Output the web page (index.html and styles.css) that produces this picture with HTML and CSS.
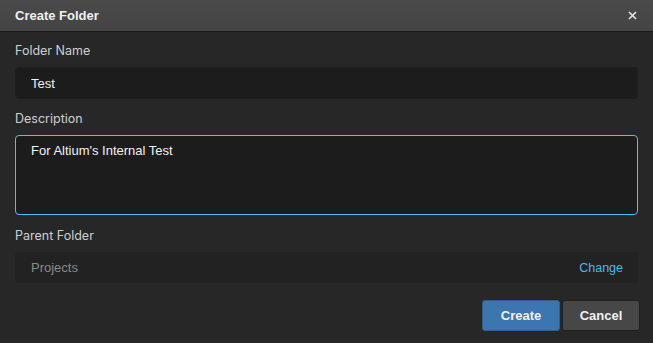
FILE: index.html
```html
<!DOCTYPE html>
<html lang="en">
<head>
  <meta charset="UTF-8">
  <title>Create Folder</title>
  <link rel="stylesheet" href="styles.css">
</head>
<body>

<div class="dialog">
  <div class="dialog-header">
    <span class="dialog-title">Create Folder</span>
    <button class="close-btn" title="Close">
      <svg width="9" height="9" viewBox="0 0 9 9">
        <path d="M1 1L8 8M8 1L1 8" stroke="#e6e6e6" stroke-width="1.6"/>
      </svg>
    </button>
  </div>

  <div class="dialog-body">
    <label class="field-label" for="folderName">Folder Name</label>
    <input class="field-input" type="text" id="folderName" value="Test">

    <label class="field-label" for="description">Description</label>
    <textarea class="field-textarea" id="description">For Altium's Internal Test</textarea>

    <div class="field-label">Parent Folder</div>
    <div class="parent-box">
      <span class="parent-name">Projects</span>
      <a class="change-link" href="#">Change</a>
    </div>

    <div class="actions">
      <button class="btn btn-primary">Create</button>
      <button class="btn btn-secondary">Cancel</button>
    </div>
  </div>
</div>

</body>
</html>
```

FILE: styles.css
```css
body {
  margin: 0;
  background-color: #272727;
  font-family: Inter, "Noto Sans", sans-serif;
  color: #d0d0d0;
}
.dialog {
  width: 653px;
  height: 343px;
  background: #272727;
}
.dialog-header {
  height: 31px;
  background: linear-gradient(#4a4a4a, #444444);
  border-bottom: 1px solid #1a1a1a;
  display: flex;
  align-items: center;
  justify-content: space-between;
  padding: 0 15px;
}
.dialog-title {
  font-family: "Liberation Sans", Arial, sans-serif;
  font-weight: bold;
  font-size: 13px;
  color: #f0f0f0;
}
.close-btn {
  background: none;
  border: none;
  padding: 0;
  margin-right: 1px;
  width: 9px;
  height: 9px;
  display: flex;
  cursor: pointer;
}
.dialog-body {
  padding: 11px 15px 0 15px;
  display: flex;
  flex-direction: column;
}
.field-label {
  font-size: 12.5px;
  color: #cfcfcf;
  line-height: 16px;
  margin-bottom: 8px;
}
.field-input,
.field-textarea {
  box-sizing: border-box;
  width: 623px;
  background: #1c1c1c;
  border: 1px solid #1e1e1e;
  border-radius: 4px;
  color: #f2f2f2;
  font-family: "Liberation Sans", Arial, sans-serif;
  font-size: 13px;
  padding: 0 15px;
  outline: none;
}
.field-input {
  height: 32px;
  margin-bottom: 12px;
}
.field-textarea {
  height: 80px;
  border-color: #4ec1f3;
  padding-top: 7px;
  resize: none;
  margin-bottom: 13px;
}
.parent-box {
  box-sizing: border-box;
  width: 623px;
  height: 31px;
  background: #222222;
  border-radius: 4px;
  display: flex;
  align-items: center;
  justify-content: space-between;
  padding: 0 15px 0 16px;
  font-family: "Liberation Sans", Arial, sans-serif;
  font-size: 13px;
}
.parent-name {
  color: #8a8a8a;
}
.change-link {
  color: #4cb8e8;
  font-size: 12.5px;
  text-decoration: none;
}
.actions {
  display: flex;
  justify-content: flex-end;
  gap: 2px;
  margin-top: 17px;
  margin-right: -2px;
}
.btn {
  width: 78px;
  height: 31px;
  border-radius: 3px;
  font-family: "Liberation Sans", Arial, sans-serif;
  font-weight: bold;
  font-size: 13px;
  color: #f2f2f2;
  cursor: pointer;
}
.btn-primary {
  background: #3b76b1;
  border: 1px solid #2f5f8f;
}
.btn-secondary {
  background: #474747;
  border: 1px solid #1f1f1f;
}
```
